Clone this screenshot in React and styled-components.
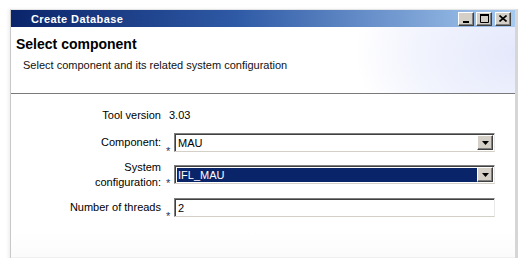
import React from 'react';
import { styled, createGlobalStyle } from 'styled-components';

const GlobalStyle = createGlobalStyle`
  html, body {
    margin: 0;
    padding: 0;
    background: #ffffff;
    overflow: hidden;
  }
  body {
    font-family: "Liberation Sans", Arial, sans-serif;
    font-size: 11px;
    color: #000;
  }
`;

const Page = styled.div`
  width: 523px;
  height: 258px;
  padding: 9px 0 0 10px;
  box-sizing: border-box;
`;

const Window = styled.div`
  width: 504px;
  height: 260px;
  border-left: 1px solid #c8c8c8;
  border-right: 3px solid #d6d6d6;
  border-top: 1px solid #e4e4e4;
  background: #fff;
  box-shadow: -2px 0 3px rgba(0, 0, 0, 0.06);
  display: flex;
  flex-direction: column;
`;

const TitleBar = styled.div`
  height: 17px;
  flex: none;
  display: flex;
  align-items: center;
  padding: 0 4px 0 20px;
  background: linear-gradient(to right, #0a246a 0%, #2f5aa6 45%, #a6caf0 100%);
`;

const TitleText = styled.span`
  flex: 1;
  color: #fff;
  font-weight: bold;
  font-size: 11px;
  letter-spacing: 0.4px;
`;

const WinButtons = styled.div`
  display: flex;
  gap: 2px;
`;

const WinButton = styled.button`
  width: 16px;
  height: 14px;
  padding: 0;
  margin-left: ${(p) => (p.$gap ? '1px' : '0')};
  background: #d4d0c8;
  border: 1px solid;
  border-color: #ffffff #404040 #404040 #ffffff;
  box-shadow: inset -1px -1px #808080;
  display: flex;
  align-items: center;
  justify-content: center;
`;

const Header = styled.div`
  height: 67px;
  flex: none;
  box-sizing: border-box;
  padding: 9px 0 0 5px;
  border-bottom: 1px solid #7a7a7a;
  background:
    radial-gradient(ellipse 130px 90px at 115% 95%, #ffffff 55%, rgba(255, 255, 255, 0) 57%),
    radial-gradient(ellipse 160px 110px at 100% 40%, #e4e8fb 0%, rgba(233, 236, 252, 0.6) 60%, rgba(255, 255, 255, 0) 100%),
    #ffffff;
`;

const Heading = styled.div`
  font-size: 14px;
  font-weight: bold;
  line-height: 17px;
`;

const SubHeading = styled.div`
  margin: 5px 0 0 7px;
  font-size: 11px;
  line-height: 14px;
  color: #111;
`;

const Body = styled.div`
  flex: 1;
  padding-top: 12px;
  display: flex;
  flex-direction: column;
  gap: 8px;
  background: linear-gradient(to bottom, #ffffff 0%, #ffffff 78%, #f9f9f9 100%);
`;

const Row = styled.div`
  display: grid;
  grid-template-columns: 151px 333px;
  align-items: ${(p) => (p.$tall ? 'end' : 'center')};
  min-height: 19px;
`;

const Label = styled.div`
  text-align: right;
  line-height: 15px;
  padding-right: 1px;
`;

const Field = styled.div`
  display: flex;
  align-items: flex-end;
  padding-bottom: ${(p) => (p.$tall ? '6px' : '0')};
`;

const Value = styled.div`
  padding-left: 7px;
  line-height: 19px;
`;

const Required = styled.span`
  width: 12px;
  flex: none;
  box-sizing: border-box;
  padding-left: 4px;
  margin-bottom: -3px;
  font-size: 11px;
  line-height: 8px;
  color: #22346a;
`;

const Box = styled.div`
  width: 321px;
  height: 19px;
  box-sizing: border-box;
  border: 1px solid;
  border-color: #808080 #e8e8e8 #d4d0c8 #808080;
  box-shadow: inset 1px 1px #404040;
  background: #fff;
  display: flex;
  align-items: stretch;
  padding: 2px 1px 1px 2px;
`;

const BoxText = styled.div`
  flex: 1;
  display: flex;
  align-items: center;
  padding-left: 1px;
  background: ${(p) => (p.$selected ? '#0a246a' : 'transparent')};
  color: ${(p) => (p.$selected ? '#fff' : '#000')};
`;

const DropButton = styled.div`
  width: 16px;
  flex: none;
  box-sizing: border-box;
  margin-top: -1px;
  background: #d4d0c8;
  border: 1px solid;
  border-color: #ffffff #404040 #404040 #ffffff;
  box-shadow: inset -1px -1px #808080;
  display: flex;
  align-items: center;
  justify-content: center;
`;

const Arrow = () => (
  <svg width="7" height="4" viewBox="0 0 7 4">
    <path d="M0 0h7L3.5 4z" fill="#000" />
  </svg>
);

const Footer = styled.div`
  height: 12px;
  margin-top: auto;
  border-top: 1px solid #f0f0f0;
  background: #fafafa;
`;

const Select = ({ value, selected }) => (
  <Box>
    <BoxText $selected={selected}>{value}</BoxText>
    <DropButton>
      <Arrow />
    </DropButton>
  </Box>
);

const App = () => {
  return (
    <Page>
      <GlobalStyle />
      <Window>
        <TitleBar>
          <TitleText>Create Database</TitleText>
          <WinButtons>
            <WinButton>
              <svg width="8" height="8" viewBox="0 0 8 8">
                <rect x="1" y="6" width="6" height="2" fill="#000" />
              </svg>
            </WinButton>
            <WinButton>
              <svg width="9" height="9" viewBox="0 0 9 9">
                <path d="M0.5 1.5h8v7h-8z" fill="none" stroke="#000" />
                <rect x="0" y="0" width="9" height="2" fill="#000" />
              </svg>
            </WinButton>
            <WinButton $gap>
              <svg width="8" height="7" viewBox="0 0 8 7">
                <path d="M0.5 0.5l7 6M7.5 0.5l-7 6" stroke="#000" strokeWidth="1.6" />
              </svg>
            </WinButton>
          </WinButtons>
        </TitleBar>
        <Header>
          <Heading>Select component</Heading>
          <SubHeading>Select component and its related system configuration</SubHeading>
        </Header>
        <Body>
          <Row>
            <Label>Tool version</Label>
            <Value>3.03</Value>
          </Row>
          <Row>
            <Label>Component:</Label>
            <Field>
              <Required>*</Required>
              <Select value="MAU" />
            </Field>
          </Row>
          <Row $tall>
            <Label>
              System
              <br />
              configuration:
            </Label>
            <Field $tall>
              <Required>*</Required>
              <Select value="IFL_MAU" selected />
            </Field>
          </Row>
          <Row>
            <Label>Number of threads</Label>
            <Field>
              <Required>*</Required>
              <Box>
                <BoxText>2</BoxText>
              </Box>
            </Field>
          </Row>
          <Footer />
        </Body>
      </Window>
    </Page>
  );
};

export default App;
